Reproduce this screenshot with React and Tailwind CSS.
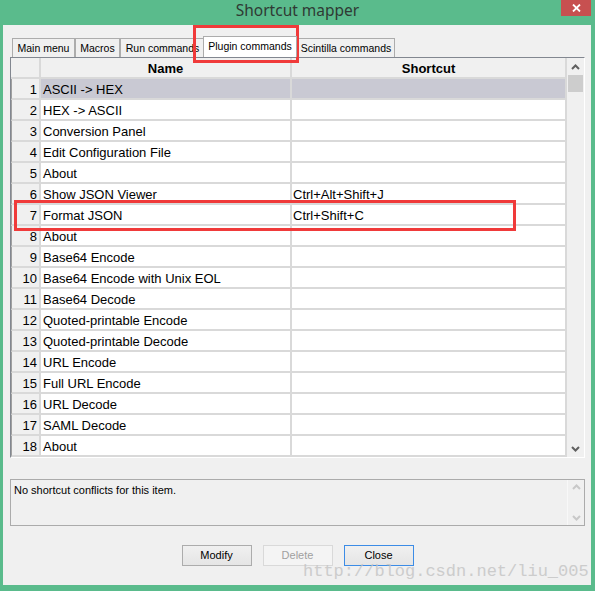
import React from "react";

const rows = [
  ["ASCII -> HEX", ""],
  ["HEX -> ASCII", ""],
  ["Conversion Panel", ""],
  ["Edit Configuration File", ""],
  ["About", ""],
  ["Show JSON Viewer", "Ctrl+Alt+Shift+J"],
  ["Format JSON", "Ctrl+Shift+C"],
  ["About", ""],
  ["Base64 Encode", ""],
  ["Base64 Encode with Unix EOL", ""],
  ["Base64 Decode", ""],
  ["Quoted-printable Encode", ""],
  ["Quoted-printable Decode", ""],
  ["URL Encode", ""],
  ["Full URL Encode", ""],
  ["URL Decode", ""],
  ["SAML Decode", ""],
  ["About", ""],
];

function Chevron({ up, color = "#606060" }) {
  return (
    <svg width="9" height="6" viewBox="0 0 9 6">
      {up ? (
        <polyline points="1,5 4.5,1.5 8,5" fill="none" stroke={color} strokeWidth="2" />
      ) : (
        <polyline points="1,1 4.5,4.5 8,1" fill="none" stroke={color} strokeWidth="2" />
      )}
    </svg>
  );
}

const tabs = [
  { label: "Main menu", w: "w-[63px]" },
  { label: "Macros", w: "w-[45px]" },
  { label: "Run commands", w: "w-[85px]" },
];

export default function App() {
  return (
    <div
      className="relative w-[595px] h-[591px] bg-[#5abb8c] flex flex-col overflow-hidden"
      style={{ fontFamily: '"Liberation Sans", Arial, sans-serif' }}
    >
      {/* Title bar */}
      <div className="h-[25px] flex items-center justify-center relative">
        <span
          className="text-[15.5px] text-[#2f3a34] leading-none -mt-[3px]"
          style={{ fontFamily: '"Noto Sans", "Open Sans", sans-serif' }}
        >
          Shortcut mapper
        </span>
        <div className="absolute right-[4px] top-0 w-[30px] h-[16px] bg-[#c75050] flex items-center justify-center">
          <svg width="9" height="8" viewBox="0 0 9 8">
            <path d="M1 0.5 L8 7.5 M8 0.5 L1 7.5" stroke="#fff" strokeWidth="1.8" />
          </svg>
        </div>
      </div>

      {/* Client */}
      <div className="flex-1 ml-[3px] mr-[4px] mb-[6px] bg-[#f0f0f0] pt-[11px] pl-[7px] pr-[6px] flex flex-col">
        {/* Tabs */}
        <div className="h-[21px] flex items-end pl-[2px] text-[10.5px] text-black">
          {tabs.map((t) => (
            <div
              key={t.label}
              className={`${t.w} h-[19px] border border-b-0 border-[#acacac] bg-[#f0f0f0] flex items-center justify-center leading-none`}
            >
              {t.label}
            </div>
          ))}
          <div className="relative z-10 -mx-[2px] w-[94px] h-[21px] border border-b-0 border-[#acacac] bg-white flex items-center justify-center leading-none pb-[1px]">
            Plugin commands
          </div>
          <div className="w-[100px] h-[19px] border border-b-0 border-[#acacac] bg-[#f0f0f0] flex items-center justify-center leading-none pl-[2px]">
            Scintilla commands
          </div>
        </div>

        {/* Grid */}
        <div className="w-[575px] h-[401px] border border-[#828790] border-r-white border-b-white flex bg-white">
          <div className="w-[556px] flex flex-col text-[13px] text-black">
            <div className="flex h-[21px] shrink-0">
              <div className="w-[30px] border-r-2 border-b-2 border-[#d9d9d9] bg-[#f0f0f0]" />
              <div className="w-[251px] border-r-2 border-b-2 border-[#d9d9d9] bg-[#f0f0f0] flex items-center justify-center font-bold pt-[2px]">
                Name
              </div>
              <div className="w-[275px] border-r-2 border-b-2 border-[#d9d9d9] bg-[#f0f0f0] flex items-center justify-center font-bold pt-[2px]">
                Shortcut
              </div>
            </div>
            {rows.map(([name, sc], i) => {
              const sel = i === 0;
              return (
                <div key={i} className="flex h-[21px] shrink-0">
                  <div className="w-[30px] border-r-2 border-b-2 border-[#d9d9d9] bg-[#f0f0f0] flex items-center justify-end pr-[2px] pt-[2px] border-l border-l-[#a0a0a0]">
                    {i + 1}
                  </div>
                  <div
                    className={`w-[251px] border-r-2 border-b-2 border-[#d9d9d9] flex items-center pl-[2px] pt-[2px] whitespace-nowrap ${
                      sel ? "bg-[#c9c9d3]" : "bg-white"
                    }`}
                  >
                    {name}
                  </div>
                  <div
                    className={`w-[275px] border-r-2 border-b-2 border-[#d9d9d9] flex items-center pl-[1px] pt-[2px] whitespace-nowrap ${
                      sel ? "bg-[#c9c9d3]" : "bg-white"
                    }`}
                  >
                    {sc}
                  </div>
                </div>
              );
            })}
          </div>
          {/* Scrollbar */}
          <div className="w-[17px] bg-[#f0f0f0] flex flex-col items-center">
            <div className="h-[17px] flex items-center justify-center">
              <Chevron up />
            </div>
            <div className="w-[15px] h-[17px] bg-[#cdcdcd]" />
            <div className="flex-1" />
            <div className="h-[17px] flex items-center justify-center">
              <Chevron />
            </div>
          </div>
        </div>

        {/* Conflicts box */}
        <div className="mt-[21px] w-[575px] h-[47px] border border-[#ababab] flex text-[11px] text-black">
          <div className="flex-1 px-[3px] pt-[3px] leading-[14px]">No shortcut conflicts for this item.</div>
          <div className="w-[17px] border-l border-l-[#f8f8f8] flex flex-col items-center justify-between py-[4px]">
            <Chevron up color="#c8c8c8" />
            <Chevron color="#c8c8c8" />
          </div>
        </div>

        {/* Buttons */}
        <div className="mt-[19px] flex justify-center gap-[11px] text-[11px]">
          <button className="w-[70px] h-[21px] border border-[#acacac] bg-gradient-to-b from-[#f0f0f0] to-[#e5e5e5] text-black leading-none">
            Modify
          </button>
          <button className="w-[70px] h-[21px] border border-[#d9d9d9] bg-[#f4f4f4] text-[#a0a0a0] leading-none">
            Delete
          </button>
          <button className="w-[70px] h-[21px] border border-[#3c8ce6] bg-gradient-to-b from-[#f0f0f0] to-[#e5e5e5] text-black leading-none">
            Close
          </button>
        </div>
      </div>

      {/* Annotation boxes */}
      <div className="absolute left-[193px] top-[25px] w-[106px] h-[38px] border-[3px] border-[#f03a3a] pointer-events-none" />
      <div className="absolute left-[14px] top-[200px] w-[502px] h-[31px] border-[3px] border-[#f03a3a] pointer-events-none" />

      {/* Watermark */}
      <div
        className="absolute left-[303px] top-[563px] text-[17px] leading-none text-[#c4c4c4] opacity-80 pointer-events-none whitespace-nowrap"
        style={{ fontFamily: '"Liberation Mono", monospace' }}
      >
        http://blog.csdn.net/liu_005
      </div>
    </div>
  );
}
